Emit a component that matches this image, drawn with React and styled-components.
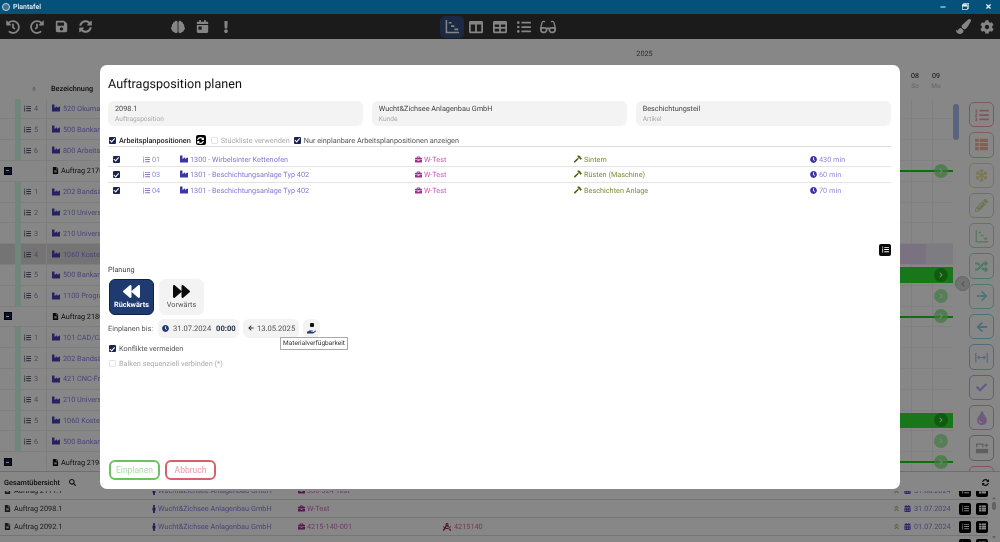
import React from 'react'
import styled, { createGlobalStyle } from 'styled-components'
import {
  FaHistory, FaSave, FaSyncAlt, FaBrain, FaCalendarDay, FaExclamation, FaColumns, FaTable, FaListUl,
  FaGlasses, FaPaintBrush, FaCog, FaListOl, FaThList, FaSnowflake, FaPencilAlt, FaRandom, FaArrowRight,
  FaArrowLeft, FaCheck, FaTint, FaIndustry, FaBriefcase, FaHammer, FaClock, FaFileAlt, FaMale,
  FaCalendarAlt, FaAngleDoubleUp, FaDraftingCompass, FaSearch, FaBackward, FaForward, FaChevronRight,
  FaChevronLeft, FaHandHolding, FaMinus, FaRegWindowRestore, FaTimes, FaSort, FaCaretUp, FaCaretDown,
} from 'react-icons/fa'

const Global = createGlobalStyle`
  html, body { margin: 0; padding: 0; height: 100%; overflow: hidden; }
  body {
    font-family: Roboto, "Liberation Sans", sans-serif;
    font-size: 7.3px;
    color: #222;
    text-rendering: geometricPrecision;
  }
  #root { height: 100%; }
`

function GanttIcon({ size = 15 }) {
  return (
    <svg width={size} height={size} viewBox="0 0 16 16" fill="none" stroke="currentColor" strokeWidth="1.6">
      <path d="M1.5 1v13.5H15" />
      <path d="M4 4h3M6.5 7.5h3.5M10 11h4" strokeWidth="1.8" />
    </svg>
  )
}

function SpreadIcon({ size = 13 }) {
  return (
    <svg width={size} height={size} viewBox="0 0 16 16" fill="none" stroke="currentColor" strokeWidth="1.5">
      <path d="M1 2v12M15 2v12M3.5 8h9M5.5 6l-2 2 2 2M10.5 6l2 2-2 2" />
    </svg>
  )
}

function StackIcon({ size = 14 }) {
  return (
    <svg width={size} height={size} viewBox="0 0 16 16" fill="currentColor">
      <path d="M1 9h14v5H1z" />
      <path d="M2 7V3.5h7V7M11 5h4M13 3v4" fill="none" stroke="currentColor" strokeWidth="1.4" />
    </svg>
  )
}

const MaterialWrap = styled.span`
  display: inline-flex;
  flex-direction: column;
  align-items: center;
  & svg { color: #111; margin-top: -2px; }
`

const MaterialBox = styled.i`
  display: block;
  width: 4px;
  height: 4px;
  border-radius: 1px;
  background: #111;
`

function MaterialIcon() {
  return (
    <MaterialWrap>
      <MaterialBox />
      <FaHandHolding size={9} />
    </MaterialWrap>
  )
}

const Page = styled.div`
  position: relative;
  width: 1000px;
  height: 542px;
  overflow: hidden;
  display: flex;
  flex-direction: column;
  background: #fff;
  filter: blur(0.3px);
`

const TitleBar = styled.div`
  height: 13px;
  flex: none;
  background: #04527a;
  color: #e8f0f4;
  display: flex;
  align-items: center;
  padding: 0 8px 1px 2px;
  font-size: 7px;
  font-weight: 500;
  position: relative;
  z-index: 3;
`

const Logo = styled.span`
  width: 8px;
  height: 8px;
  border-radius: 50%;
  border: 1.5px solid #c8d8e4;
  background: #3a6f90;
  box-sizing: border-box;
  margin-right: 3px;
`

const WindowButtons = styled.div`
  margin-left: auto;
  display: flex;
  align-items: center;
  gap: 16px;
  color: #e8f0f4;
  & svg { display: block; }
`

const Toolbar = styled.div`
  height: 25px;
  flex: none;
  background: #1b1b1b;
  display: flex;
  align-items: center;
  padding: 0 1px;
  position: relative;
  z-index: 3;
`

const ToolGroup = styled.div`
  display: flex;
  align-items: center;
  margin-left: ${p => p.$offset || 0}px;
  ${p => p.$end && 'margin-left: auto;'}
`

const ToolButton = styled.div`
  width: 24px;
  height: 22px;
  display: flex;
  align-items: center;
  justify-content: center;
  color: #858585;
  border-radius: 5px;
  background: ${p => (p.$active ? '#1b2a42' : 'transparent')};
  & svg { transform: ${p => (p.$flip ? 'scaleX(-1)' : 'none')}; }
`

const Workspace = styled.div`
  flex: 1;
  min-height: 0;
  display: flex;
  overflow: hidden;
`

const TableColumn = styled.div`
  width: 140px;
  flex: none;
`

const TableHead = styled.div`
  height: 59.6px;
  box-sizing: border-box;
  padding: 45px 0 0 51px;
  display: flex;
  font-weight: 500;
  color: #111;
  position: relative;
`

const SortMark = styled.span`
  position: absolute;
  left: 31px;
  top: 46px;
  color: #bbb;
`

const TableRow = styled.div`
  height: 20.8px;
  display: flex;
  align-items: stretch;
  background: ${p => (p.$selected ? '#dcdcdc' : 'transparent')};
  border-bottom: 0.5px solid #eee;
  box-sizing: border-box;
`

const ExpandCell = styled.div`
  width: 15px;
  display: flex;
  align-items: center;
  justify-content: center;
`

const ExpandBox = styled.span`
  width: 6px;
  height: 6px;
  background: #10204f;
  border: 1px solid #000;
  display: flex;
  align-items: center;
  justify-content: center;
  &::after { content: ''; width: 3px; height: 1px; background: #fff; }
`

const Stripe = styled.div`
  width: 6px;
  background: ${p => (p.$on ? '#d2ffe8' : 'transparent')};
`

const PosCell = styled.div`
  width: 26px;
  box-sizing: border-box;
  padding-left: 3px;
  display: flex;
  align-items: center;
  gap: 3px;
  color: #a080c0;
  border-right: 1px solid #eee;
  & svg { color: #4a4a6a; }
`

const NameCell = styled.div`
  flex: 1;
  padding-left: 5px;
  display: flex;
  align-items: center;
  gap: ${p => (p.$group ? 2 : 3)}px;
  white-space: nowrap;
  overflow: hidden;
  color: ${p => (p.$group ? '#222' : '#8a84e4')};
  & svg { color: ${p => (p.$group ? '#111' : '#4a40b8')}; flex: none; }
`

const Timeline = styled.div`
  flex: 1;
  min-width: 0;
  position: relative;
`

const TimelineHead = styled.div`
  height: 59.6px;
  display: flex;
  flex-direction: column;
  align-items: center;
`

const YearLabel = styled.div`
  line-height: 10px;
  color: #555;
  padding: 10px 0 0 196px;
`

const DayHead = styled.div`
  align-self: flex-end;
  margin-top: 12px;
  display: flex;
  padding-right: 12px;
  gap: 11px;
`

const Day = styled.div`
  width: 10px;
  text-align: center;
  font-size: 7px;
  line-height: 10px;
  color: #111;
  & small { display: block; font-size: 6.5px; color: #bbb; }
`

const ChartBody = styled.div`
  background: repeating-linear-gradient(to left, transparent 0 20.5px, #f1f1f1 20.5px 21px);
`

const ChartRow = styled.div`
  height: 20.8px;
  position: relative;
  display: flex;
  align-items: center;
  justify-content: flex-end;
  border-bottom: 0.5px solid #f4f4f4;
  box-sizing: border-box;
  background: ${p => p.$kind === 'thick' ? '#30e030' : 'transparent'};
  background-clip: content-box;
  padding-top: ${p => p.$kind === 'thick' ? 2 : 0}px;
  padding-bottom: ${p => p.$kind === 'thick' ? 2 : 0}px;
  &::before {
    content: '';
    display: ${p => p.$kind === 'line' ? 'block' : 'none'};
    position: absolute;
    left: 0;
    right: 0;
    top: 9px;
    height: 2px;
    background: #18d018;
  }
`

const Reserved = styled.div`
  display: flex;
  height: 100%;
  margin-left: auto;
  & i { display: block; width: 27px; height: 100%; }
  & i:first-child { background: #e6d8f4; }
  & i:last-child { background: #eceaf2; }
`

const RowCircle = styled.span`
  width: 14px;
  height: 14px;
  margin-right: 5px;
  border-radius: 50%;
  background: ${p => p.$tone === 'thick' ? 'rgba(0, 110, 0, 0.45)' : p.$tone === 'line' ? 'rgba(120, 230, 120, 0.75)' : '#a4eea4'};
  color: #eaffea;
  display: flex;
  align-items: center;
  justify-content: center;
  position: relative;
  z-index: 1;
`

const Track = styled.div`
  width: 7px;
  flex: none;
  padding-top: 65px;
  box-sizing: border-box;
`

const Thumb = styled.div`
  width: 6px;
  height: 36px;
  border-radius: 3px;
  background: #a8bff0;
`

const SideBar = styled.div`
  width: 40px;
  flex: none;
  box-sizing: border-box;
  padding: 63px 0 0 9px;
  display: flex;
  flex-direction: column;
  gap: 5px;
`

const SideButton = styled.div`
  width: 25px;
  height: 25.3px;
  flex: none;
  box-sizing: border-box;
  border: 1px solid ${p => p.$color};
  border-radius: 5px;
  display: flex;
  align-items: center;
  justify-content: center;
  color: ${p => p.$color};
`

const CollapseHandle = styled.div`
  position: absolute;
  left: 955px;
  top: 276px;
  width: 15px;
  height: 15px;
  border-radius: 50%;
  background: #d8d8d8;
  border: 1px solid #bbb;
  box-sizing: border-box;
  color: #999;
  display: flex;
  align-items: center;
  justify-content: center;
  z-index: 1;
`

const Overview = styled.div`
  height: 71px;
  flex: none;
  border-top: 1px solid #d0d0d0;
  box-sizing: border-box;
  background: #fff;
  display: flex;
  flex-direction: column;
`

const OverviewHead = styled.div`
  height: 19px;
  flex: none;
  background: #fff;
  position: relative;
  z-index: 1;
  display: flex;
  align-items: center;
  padding: 2px 11px 0 4px;
  box-sizing: border-box;
  font-weight: 500;
  color: #111;
  & svg:first-of-type { margin-left: 9px; color: #222; }
  & svg:last-of-type { margin-left: auto; color: #111; }
`

const OverviewBody = styled.div`
  flex: 1;
  min-height: 0;
  display: flex;
  overflow: hidden;
`

const OverviewList = styled.div`
  flex: 1;
  margin-top: -9px;
`

const OverviewRow = styled.div`
  height: 18px;
  display: flex;
  align-items: center;
  box-sizing: border-box;
  border-bottom: 1px solid #ddd;
  white-space: nowrap;
`

const Cell = styled.div`
  width: ${p => p.$w}px;
  flex: none;
  box-sizing: border-box;
  padding-left: ${p => p.$pad || 0}px;
  display: flex;
  align-items: center;
  gap: ${p => p.$gap ?? 3}px;
  color: ${p => p.$color || '#333'};
  & svg { color: ${p => p.$iconColor || 'inherit'}; flex: none; }
`

const Chevrons = styled.span`
  width: 7px;
  margin-right: 4px;
  flex: none;
  color: #b8b890;
  display: flex;
`

const BlackButton = styled.span`
  width: 12px;
  height: 12px;
  margin-left: ${p => p.$gap}px;
  background: #000;
  color: #fff;
  border-radius: 2px;
  display: flex;
  align-items: center;
  justify-content: center;
  flex: none;
`

const ListScroll = styled.div`
  width: 12px;
  flex: none;
  color: #aaa;
  display: flex;
  flex-direction: column;
  align-items: center;
  padding-top: 4px;
  & i { display: block; width: 4px; height: 8px; background: #bbb; border-radius: 2px; margin: 1px 0 24px; }
`

const Backdrop = styled.div`
  position: absolute;
  left: 0;
  right: 0;
  top: 38px;
  bottom: 0;
  background: rgba(0, 0, 0, 0.47);
  z-index: 2;
  padding: 27px 100px 53px;
  box-sizing: border-box;
  display: flex;
`

const Modal = styled.div`
  flex: 1;
  background: #fff;
  border-radius: 7px;
  padding: 11px 9px 9px 8px;
  display: flex;
  flex-direction: column;
  color: #444;
`

const ModalTitle = styled.div`
  font-size: 12.6px;
  line-height: 18px;
  color: #111;
`

const InfoGrid = styled.div`
  margin-top: 7px;
  display: grid;
  grid-template-columns: repeat(3, 1fr);
  gap: 8.5px;
`

const InfoBox = styled.div`
  background: #f3f3f3;
  border-radius: 6px;
  height: 25px;
  padding: 3px 7px 0;
  box-sizing: border-box;
  line-height: 10px;
  color: #444;
  & small { display: block; font-size: 6.6px; line-height: 10px; color: #aaa; }
`

const OptionRow = styled.div`
  margin-top: 9px;
  height: 10px;
  display: flex;
  align-items: center;
  padding-left: 1px;
`

const Check = styled.input.attrs({ type: 'checkbox' })`
  appearance: none;
  width: 7px;
  height: 7px;
  margin: 0 3px 0 0;
  border-radius: 1px;
  flex: none;
  position: relative;
  background: ${p => (p.disabled ? '#fff' : '#1a2352')};
  border: ${p => (p.disabled ? '1px solid #e4e4e4' : 'none')};
  box-sizing: border-box;
  &:checked::after {
    content: '';
    position: absolute;
    left: 2.4px;
    top: 0.6px;
    width: 1.6px;
    height: 3.6px;
    border: solid #fff;
    border-width: 0 1px 1px 0;
    transform: rotate(42deg);
  }
`

const OptionLabel = styled.label`
  display: inline-flex;
  align-items: center;
  white-space: nowrap;
  margin-right: ${p => p.$gap || 0}px;
  font-weight: ${p => (p.$strong ? 500 : 400)};
  color: ${p => (p.$muted ? '#aaa' : p.$strong ? '#222' : '#555')};
`

const SyncButton = styled.span`
  width: 10px;
  height: 10px;
  background: #000;
  color: #fff;
  border-radius: 2px;
  display: flex;
  align-items: center;
  justify-content: center;
  margin-right: 5px;
`

const PositionList = styled.div`
  margin-top: 1px;
  padding-top: 5px;
  border-top: 1px solid #dcdcdc;
`

const PositionRow = styled.div`
  height: 15.3px;
  box-sizing: border-box;
  display: grid;
  grid-template-columns: 30px 37px 235px 159px 236px 1fr;
  align-items: center;
  padding-left: 5px;
  border-bottom: 1px solid #e4e4e4;
  &:last-child { border-bottom: none; }
  & > input { margin: 0; }
`

const PositionCell = styled.div`
  display: flex;
  align-items: center;
  gap: 2px;
  white-space: nowrap;
  color: ${p => p.$color};
  & svg { color: ${p => p.$iconColor}; flex: none; }
`

const ListToggleRow = styled.div`
  margin-top: 46px;
  display: flex;
  justify-content: flex-end;
`

const ListToggle = styled.span`
  width: 12px;
  height: 12px;
  border-radius: 2px;
  background: #0a0a0a;
  color: #fff;
  display: flex;
  align-items: center;
  justify-content: center;
`

const SectionLabel = styled.div`
  margin-top: 9px;
  line-height: 10px;
  color: #444;
`

const DirectionRow = styled.div`
  margin-top: 4px;
  padding-left: 1px;
  display: flex;
  gap: 5px;
`

const DirectionButton = styled.div`
  width: 45px;
  height: 36px;
  box-sizing: border-box;
  border-radius: 6px;
  display: flex;
  flex-direction: column;
  align-items: center;
  padding-top: 3px;
  background: ${p => (p.$active ? '#1e3a6e' : '#f3f3f3')};
  border: 1px solid ${p => (p.$active ? '#10204a' : '#f3f3f3')};
  color: ${p => (p.$active ? '#fff' : '#555')};
  font-weight: ${p => (p.$active ? 700 : 400)};
  & svg { color: ${p => (p.$active ? '#fff' : '#0a0a0a')}; }
`

const ScheduleRow = styled.div`
  margin-top: 4px;
  display: flex;
  align-items: center;
  gap: 4px;
  position: relative;
`

const ScheduleLabel = styled.span`
  width: 46px;
  white-space: nowrap;
  color: #555;
`

const Pill = styled.div`
  width: ${p => p.$w}px;
  height: 19px;
  box-sizing: border-box;
  padding: 0 ${p => p.$pad || 5}px;
  border-radius: 6px;
  background: #f3f3f3;
  display: flex;
  align-items: center;
  gap: ${p => p.$gap || 3}px;
  color: #555;
  font-size: 7.6px;
  white-space: nowrap;
  & b { font-weight: 700; color: #26304f; margin-left: 3px; }
  & svg { color: #1e3a6e; flex: none; }
`

const Tooltip = styled.div`
  position: absolute;
  left: 172px;
  top: 18px;
  width: 68px;
  height: 13px;
  box-sizing: border-box;
  background: #fff;
  border: 1px solid #aaa;
  font-size: 6.5px;
  color: #333;
  display: flex;
  align-items: center;
  justify-content: center;
  white-space: nowrap;
`

const FormLine = styled.div`
  margin-top: ${p => p.$top}px;
  padding-left: 1px;
  height: 10px;
  display: flex;
  align-items: center;
`

const Footer = styled.div`
  margin-top: auto;
  padding-left: 1px;
  display: flex;
  gap: 5px;
`

const ActionButton = styled.button`
  width: 51px;
  height: 20px;
  padding: 0;
  background: #fff;
  border: 2px solid ${p => p.$border};
  border-radius: 6px;
  font-family: inherit;
  font-size: 8.5px;
  color: ${p => p.$color};
`

const positions = [
  { no: '01', machine: '1300 - Wirbelsinter Kettenofen', step: 'Sintern', time: '430 min' },
  { no: '03', machine: '1301 - Beschichtungsanlage Typ 402', step: 'Rüsten (Maschine)', time: '60 min' },
  { no: '04', machine: '1301 - Beschichtungsanlage Typ 402', step: 'Beschichten Anlage', time: '70 min' },
]

const rows = [
  { pos: 4, name: '520 Okuma' },
  { pos: 5, name: '500 Bankarbeit' },
  { pos: 6, name: '800 Arbeitsplatz' },
  { group: 'Auftrag 2170.1', kind: 'line', circle: 'line' },
  { pos: 1, name: '202 Bandsäge' },
  { pos: 2, name: '210 Universal' },
  { pos: 3, name: '210 Universal' },
  { pos: 4, name: '1060 Kostenstelle', selected: true, kind: 'reserved' },
  { pos: 5, name: '500 Bankarbeit', kind: 'thick', circle: 'thick' },
  { pos: 6, name: '1100 Programm', circle: 'light' },
  { group: 'Auftrag 2180.1', kind: 'line', circle: 'line' },
  { pos: 1, name: '101 CAD/CAM' },
  { pos: 2, name: '202 Bandsäge' },
  { pos: 3, name: '421 CNC-Fräse' },
  { pos: 4, name: '210 Universal' },
  { pos: 5, name: '1060 Kostenstelle', kind: 'thick', circle: 'thick' },
  { pos: 6, name: '500 Bankarbeit', circle: 'light' },
  { group: 'Auftrag 2194.1', kind: 'line', circle: 'line' },
]

const sideButtons = [
  { color: '#f2a6a6', icon: <FaListOl size={14} /> },
  { color: '#f0b8a0', icon: <FaThList size={13} /> },
  { color: '#e8e09a', icon: <FaSnowflake size={13} /> },
  { color: '#c4e49c', icon: <FaPencilAlt size={13} /> },
  { color: '#aee4b4', icon: <GanttIcon size={14} /> },
  { color: '#90e4c4', icon: <FaRandom size={13} /> },
  { color: '#90e4dc', icon: <FaArrowRight size={12} /> },
  { color: '#90d4ec', icon: <FaArrowLeft size={12} /> },
  { color: '#a8c0f4', icon: <SpreadIcon /> },
  { color: '#b4b0f4', icon: <FaCheck size={11} /> },
  { color: '#d4a8ec', icon: <FaTint size={14} /> },
  { color: '#b4b4b4', icon: <StackIcon /> },
  { color: '#f2a0b8', icon: <FaMinus size={10} /> },
]

const overviewRows = [
  { order: 'Auftrag 2111.1', customer: true, part: '330-324-Test', date: '31.08.2024' },
  { order: 'Auftrag 2098.1', customer: true, part: 'W-Test', date: '31.07.2024' },
  { order: 'Auftrag 2092.1', customer: true, part: '4215-140-001', article: '4215140', date: '01.07.2024' },
  {},
]

export default function App() {
  return (
    <Page>
      <Global />
      <TitleBar>
        <Logo />
        Plantafel
        <WindowButtons>
          <FaMinus size={6} />
          <FaRegWindowRestore size={7} />
          <FaTimes size={7} />
        </WindowButtons>
      </TitleBar>
      <Toolbar>
        <ToolGroup>
          <ToolButton><FaHistory size={14} /></ToolButton>
          <ToolButton $flip><FaHistory size={14} /></ToolButton>
          <ToolButton><FaSave size={13} /></ToolButton>
          <ToolButton><FaSyncAlt size={13} /></ToolButton>
        </ToolGroup>
        <ToolGroup $offset={69}>
          <ToolButton><FaBrain size={14} /></ToolButton>
          <ToolButton><FaCalendarDay size={13} /></ToolButton>
          <ToolButton><FaExclamation size={12} /></ToolButton>
        </ToolGroup>
        <ToolGroup $offset={202}>
          <ToolButton $active><GanttIcon /></ToolButton>
          <ToolButton><FaColumns size={14} /></ToolButton>
          <ToolButton><FaTable size={14} /></ToolButton>
          <ToolButton><FaListUl size={14} /></ToolButton>
          <ToolButton><FaGlasses size={16} /></ToolButton>
        </ToolGroup>
        <ToolGroup $end>
          <ToolButton><FaPaintBrush size={15} /></ToolButton>
          <ToolButton><FaCog size={14} /></ToolButton>
        </ToolGroup>
      </Toolbar>

      <Workspace>
        <TableColumn>
          <TableHead>
            <SortMark><FaSort size={6} /></SortMark>
            Bezeichnung
          </TableHead>
          {rows.map((r, i) => (
            <TableRow key={i} $selected={r.selected}>
              <ExpandCell>{r.group && <ExpandBox />}</ExpandCell>
              <Stripe $on={!r.group} />
              <PosCell>
                {!r.group && <><FaListOl size={7} />{r.pos}</>}
              </PosCell>
              <NameCell $group={!!r.group}>
                {r.group ? <FaFileAlt size={7} /> : <FaIndustry size={8} />}
                {r.group || r.name}
              </NameCell>
            </TableRow>
          ))}
        </TableColumn>

        <Timeline>
          <TimelineHead>
            <YearLabel>2025</YearLabel>
            <DayHead>
              <Day>08<small>So</small></Day>
              <Day>09<small>Mo</small></Day>
            </DayHead>
          </TimelineHead>
          <ChartBody>
            {rows.map((r, i) => (
              <ChartRow key={i} $kind={r.kind}>
                {r.kind === 'reserved' && <Reserved><i /><i /></Reserved>}
                {r.circle && (
                  <RowCircle $tone={r.circle}>
                    <FaChevronRight size={6} />
                  </RowCircle>
                )}
              </ChartRow>
            ))}
          </ChartBody>
        </Timeline>

        <Track><Thumb /></Track>
        <SideBar>
          {sideButtons.map((b, i) => (
            <SideButton key={i} $color={b.color}>{b.icon}</SideButton>
          ))}
        </SideBar>
        <CollapseHandle><FaChevronLeft size={6} /></CollapseHandle>
      </Workspace>

      <Overview>
        <OverviewHead>
          Gesamtübersicht
          <FaSearch size={7} />
          <FaSyncAlt size={7} />
        </OverviewHead>
        <OverviewBody>
          <OverviewList>
            {overviewRows.map((r, i) => (
              <OverviewRow key={i}>
                <Cell $w={150} $pad={4}>
                  {r.order && <><FaFileAlt size={7} />{r.order}</>}
                </Cell>
                <Cell $w={148} $gap={0} $color="#8a84e4" $iconColor="#3d30b0">
                  {r.customer && <><FaMale size={8} />Wucht&Zichsee Anlagenbau GmbH</>}
                </Cell>
                <Cell $w={145} $gap={2} $color="#d070c0" $iconColor="#a03090">
                  {r.part && <><FaBriefcase size={7} />{r.part}</>}
                </Cell>
                <Cell $w={450} $color="#e07080" $iconColor="#a03040">
                  {r.article && <><FaDraftingCompass size={8} />{r.article}</>}
                </Cell>
                <Chevrons>{r.date && <FaAngleDoubleUp size={7} />}</Chevrons>
                <Cell $w={55} $color="#8a84e4" $iconColor="#4a40b8">
                  {r.date && <><FaCalendarAlt size={7} />{r.date}</>}
                </Cell>
                <BlackButton $gap={0}><FaListOl size={7} /></BlackButton>
                <BlackButton $gap={5}><FaThList size={7} /></BlackButton>
              </OverviewRow>
            ))}
          </OverviewList>
          <ListScroll>
            <FaCaretUp size={6} />
            <i />
            <FaCaretDown size={6} />
          </ListScroll>
        </OverviewBody>
      </Overview>

      <Backdrop>
        <Modal>
          <ModalTitle>Auftragsposition planen</ModalTitle>
          <InfoGrid>
            <InfoBox>2098.1<small>Auftragsposition</small></InfoBox>
            <InfoBox>Wucht&Zichsee Anlagenbau GmbH<small>Kunde</small></InfoBox>
            <InfoBox>Beschichtungsteil<small>Artikel</small></InfoBox>
          </InfoGrid>

          <OptionRow>
            <OptionLabel $strong $gap={5}><Check defaultChecked />Arbeitsplanpositionen</OptionLabel>
            <SyncButton><FaSyncAlt size={7} /></SyncButton>
            <OptionLabel $muted $gap={4}><Check disabled />Stückliste verwenden</OptionLabel>
            <OptionLabel><Check defaultChecked />Nur einplanbare Arbeitsplanpositionen anzeigen</OptionLabel>
          </OptionRow>

          <PositionList>
            {positions.map(p => (
              <PositionRow key={p.no}>
                <Check defaultChecked />
                <PositionCell $color="#8f8ad8" $iconColor="#8f6ac8"><FaListOl size={7} />{p.no}</PositionCell>
                <PositionCell $color="#8078d8" $iconColor="#3d35a8"><FaIndustry size={8} />{p.machine}</PositionCell>
                <PositionCell $color="#c060b8" $iconColor="#a03090"><FaBriefcase size={7} />W-Test</PositionCell>
                <PositionCell $color="#7f8a3a" $iconColor="#55600c"><FaHammer size={8} />{p.step}</PositionCell>
                <PositionCell $color="#8f8ad8" $iconColor="#3d35a8"><FaClock size={7} />{p.time}</PositionCell>
              </PositionRow>
            ))}
          </PositionList>

          <ListToggleRow>
            <ListToggle><FaListOl size={7} /></ListToggle>
          </ListToggleRow>

          <SectionLabel>Planung</SectionLabel>
          <DirectionRow>
            <DirectionButton $active><FaBackward size={17} />Rückwärts</DirectionButton>
            <DirectionButton><FaForward size={17} />Vorwärts</DirectionButton>
          </DirectionRow>

          <ScheduleRow>
            <ScheduleLabel>Einplanen bis:</ScheduleLabel>
            <Pill $w={81} $pad={4} $gap={4}><FaClock size={7} /><span>31.07.2024 <b>00:00</b></span></Pill>
            <Pill $w={56}><FaArrowLeft size={6} color="#333" />13.05.2025</Pill>
            <Pill $w={17} $pad={4}><MaterialIcon /></Pill>
            <Tooltip>Materialverfügbarkeit</Tooltip>
          </ScheduleRow>

          <FormLine $top={6}>
            <OptionLabel><Check defaultChecked />Konflikte vermeiden</OptionLabel>
          </FormLine>
          <FormLine $top={5}>
            <OptionLabel $muted><Check disabled />Balken sequenziell verbinden (*)</OptionLabel>
          </FormLine>

          <Footer>
            <ActionButton $border="#6cc160" $color="#a8dca2">Einplanen</ActionButton>
            <ActionButton $border="#d9606a" $color="#e8989f">Abbruch</ActionButton>
          </Footer>
        </Modal>
      </Backdrop>
    </Page>
  )
}
